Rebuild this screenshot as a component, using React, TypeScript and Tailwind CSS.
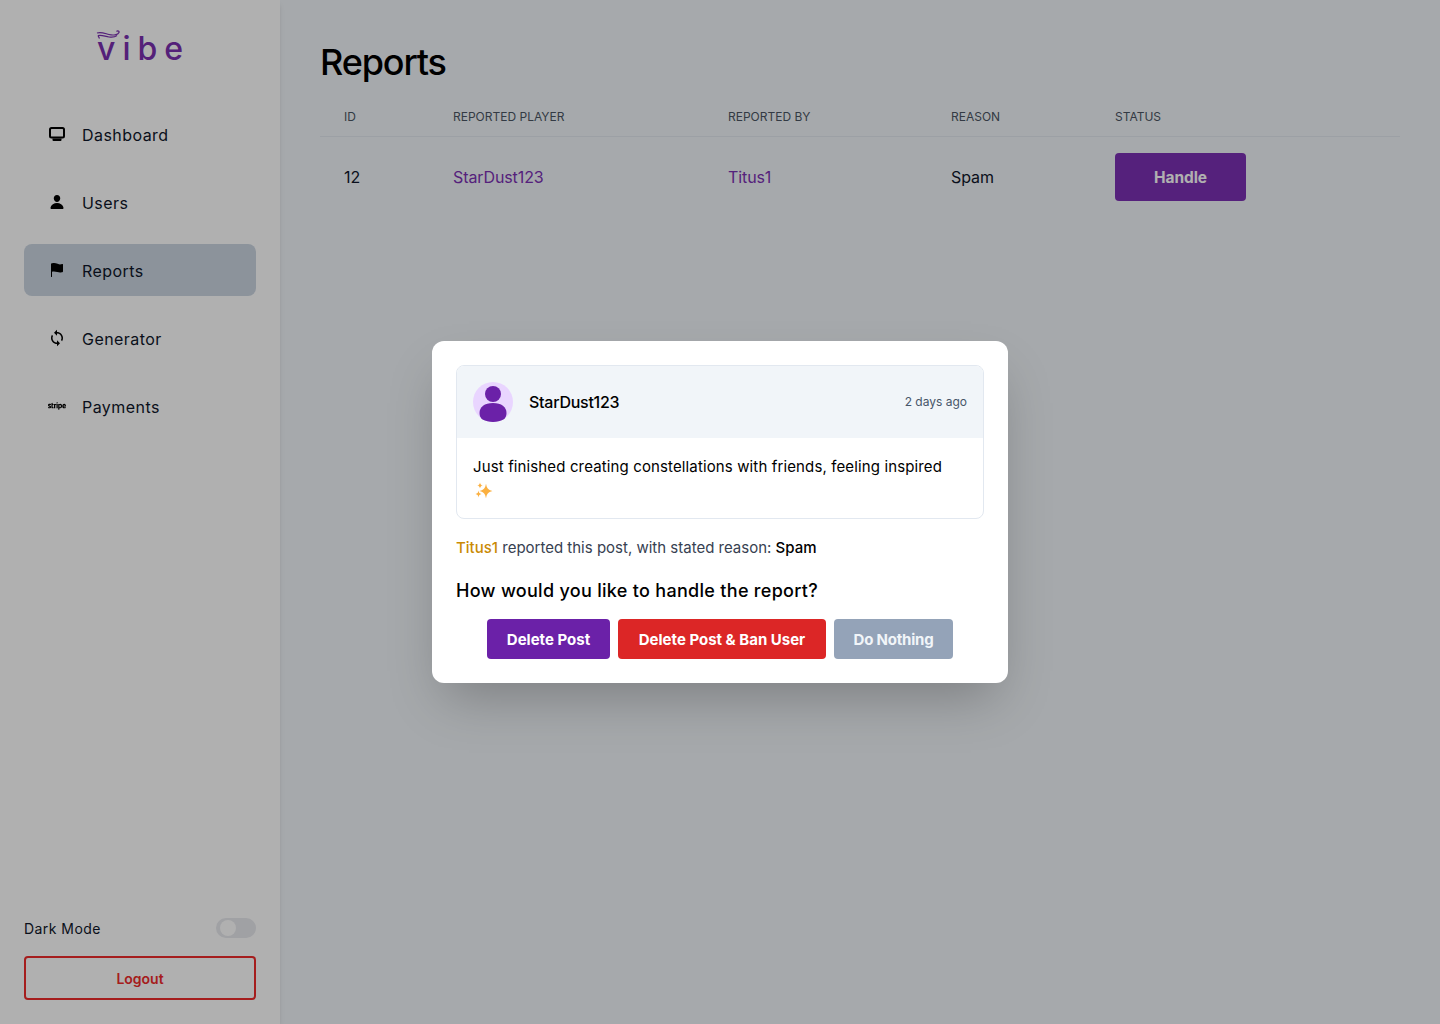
import { FaStripe } from "react-icons/fa";
import { IoFlag, IoPerson } from "react-icons/io5";
import { MdSync } from "react-icons/md";

const MonitorIcon = () => (
    <svg width="16" height="14" viewBox="0 0 16 14" fill="none">
        <rect x="1" y="1" width="14" height="9.500" rx="1.500" stroke="black" strokeWidth="2" />
        <path d="M3.500 11.500h9v1.500a1 1 0 0 1-1 1h-7a1 1 0 0 1-1-1z" fill="black" />
    </svg>
);

const NAV = [
    { label: "Dashboard", icon: <MonitorIcon /> },
    { label: "Users", icon: <IoPerson size={16} /> },
    { label: "Reports", icon: <IoFlag size={16} />, active: true },
    { label: "Generator", icon: <MdSync size={18} /> },
    { label: "Payments", icon: <FaStripe size={20} /> },
];

const Logo = () => (
    <div className="relative h-[40px] flex items-center justify-center">
        <svg className="absolute left-[72px] top-[2px]" width="26" height="12" viewBox="0 0 26 12" fill="none" stroke="#7a2fb0" strokeWidth="1.200">
            <path d="M1 3c4-1.500 8 .5 12 1.500 4 1 9 .5 10-2 .6-1.500-1.500-2-2.500-1" />
            <path d="M2 5.500c4-1 7 1 11 1.500 3 .4 6 .2 8-1.500" />
            <path d="M2 5.500l1.500 3" />
        </svg>
        <span className="text-[32px] leading-[40px] mt-[2px] font-medium text-[#7a2fb0] tracking-[7px] pl-[7px]">vibe</span>
    </div>
);

const Sparkles = () => (
    <svg className="block mt-[3px] ml-[2px]" width="18" height="18" viewBox="0 0 18 18" fill="#fbb040">
        <path d="M11 1.500c.7 4.500 2 6.300 6.500 7.500-4.500 1.200-5.800 3-6.500 7.500-.7-4.500-2-6.300-6.500-7.500 4.500-1.200 5.800-3 6.500-7.500z" />
        <path d="M5 .5c.4 2 1 2.600 2.800 3-1.800.4-2.400 1-2.800 3-.4-2-1-2.600-2.800-3 1.800-.4 2.400-1 2.800-3z" />
        <path d="M3.500 8.500c.4 2.400 1 3 3 3.500-2 .5-2.600 1.100-3 3.500-.4-2.400-1-3-3-3.500 2-.5 2.600-1.100 3-3.500z" />
    </svg>
);

const Avatar = () => (
    <svg width="40" height="40" viewBox="0 0 40 40">
        <circle cx="20" cy="20" r="20" fill="#e9d5ff" />
        <circle cx="20" cy="12" r="8" fill="#6b21a8" />
        <path d="M6.500 31c0-6 5-10 13.500-10s13.500 4 13.500 10c0 3-1 5-3 6.500-3 1.500-6.500 2.500-10.500 2.500s-7.500-1-10.500-2.500c-2-1.500-3-3.500-3-6.500z" fill="#6b21a8" />
    </svg>
);

export default function App() {
    return (
        <div className="relative flex h-screen overflow-hidden bg-[#f1f5f9] font-['Inter',sans-serif] text-black">
            <aside className="w-[280px] shrink-0 flex flex-col bg-white px-6 pt-[28px] pb-6 shadow-md">
                <Logo />
                <nav className="mt-[40px] flex flex-col gap-4">
                    {NAV.map((item) => (
                        <div key={item.label} className={`h-[52px] flex items-center rounded-lg pl-6 gap-4 ${item.active ? "bg-[#cbd5e1]" : ""}`}>
                            <span className="w-[18px] flex justify-center">{item.icon}</span>
                            <span className="text-[16px] pt-[2px] tracking-[0.45px] text-[#0f172a]">{item.label}</span>
                        </div>
                    ))}
                </nav>
                <div className="mt-auto flex items-center justify-between h-[20px]">
                    <span className="text-sm pt-[2px] tracking-[0.45px] text-[#0f172a]">Dark Mode</span>
                    <div className="w-10 h-5 rounded-full bg-[#e8e9ee] p-[2px] pl-[4px]">
                        <div className="w-4 h-4 rounded-full bg-white" />
                    </div>
                </div>
                <button className="mt-[18px] h-[44px] pt-[2px] rounded border-2 border-[#ef2b2b] text-[#ef2b2b] text-sm font-semibold">Logout</button>
            </aside>

            <main className="flex-1 px-10 pt-[40px]">
                <h1 className="text-[36px] leading-[44px] font-medium tracking-[-1.150px]">Reports</h1>
                <table className="mt-[14px] w-full text-left border-collapse">
                    <thead>
                        <tr className="border-b border-[#e2e8f0] text-xs text-[#4b5563] uppercase">
                            <th className="w-[109px] pl-6 h-[38px] font-normal">ID</th>
                            <th className="w-[275px] pl-6 font-normal">Reported Player</th>
                            <th className="w-[223px] pl-6 font-normal">Reported By</th>
                            <th className="w-[164px] pl-6 font-normal">Reason</th>
                            <th className="pl-6 font-normal">Status</th>
                        </tr>
                    </thead>
                    <tbody className="text-[16px] tracking-[-0.1px]">
                        <tr>
                            <td className="pl-6 py-4 text-[#0f172a]">12</td>
                            <td className="pl-6 py-4 text-[#7c30b4]">StarDust123</td>
                            <td className="pl-6 py-4 text-[#7c30b4]">Titus1</td>
                            <td className="pl-6 py-4 text-[#0f172a]">Spam</td>
                            <td className="pl-6 py-4">
                                <button className="w-[131px] h-12 pt-[3px] rounded bg-[#7c30b4] text-white text-[15.500px] font-bold">Handle</button>
                            </td>
                        </tr>
                    </tbody>
                </table>
            </main>

            <div className="absolute inset-0 bg-black/[0.31] flex items-center justify-center">
                <div className="w-[576px] rounded-xl bg-white p-6 shadow-2xl">
                    <div className="rounded-lg border border-[#e2e8f0] overflow-hidden">
                        <div className="h-[72px] bg-[#f1f5f9] flex items-center justify-between px-4">
                            <div className="flex items-center gap-4">
                                <Avatar />
                                <span className="text-[16px] font-medium tracking-[-0.25px]">StarDust123</span>
                            </div>
                            <span className="text-xs text-[#475569]">2 days ago</span>
                        </div>
                        <div className="px-4 pt-[17px] text-[15px] tracking-[0.13px] leading-6 h-[80px]">
                            Just finished creating constellations with friends, feeling inspired
                            <Sparkles />
                        </div>
                    </div>
                    <p className="mt-[19px] text-[15px] leading-5 text-[#374151]">
                        <span className="font-medium text-[#ca8a04]">Titus1</span> reported this post, with stated reason: <span className="font-medium text-black">Spam</span>
                    </p>
                    <h2 className="mt-[21px] text-[18px] leading-6 tracking-[0.3px] font-medium">How would you like to handle the report?</h2>
                    <div className="mt-4 flex justify-center gap-2">
                        <button className="w-[123px] h-10 pt-[3px] rounded bg-[#6b21a8] text-white text-[15px] font-bold">Delete Post</button>
                        <button className="w-[208px] h-10 pt-[3px] rounded bg-[#dc2626] text-white text-[15px] font-bold">Delete Post &amp; Ban User</button>
                        <button className="w-[119px] h-10 pt-[3px] rounded bg-[#94a3b8] text-[#f1f5f9] text-[15px] tracking-[-0.2px] font-bold">Do Nothing</button>
                    </div>
                </div>
            </div>
        </div>
    );
}
